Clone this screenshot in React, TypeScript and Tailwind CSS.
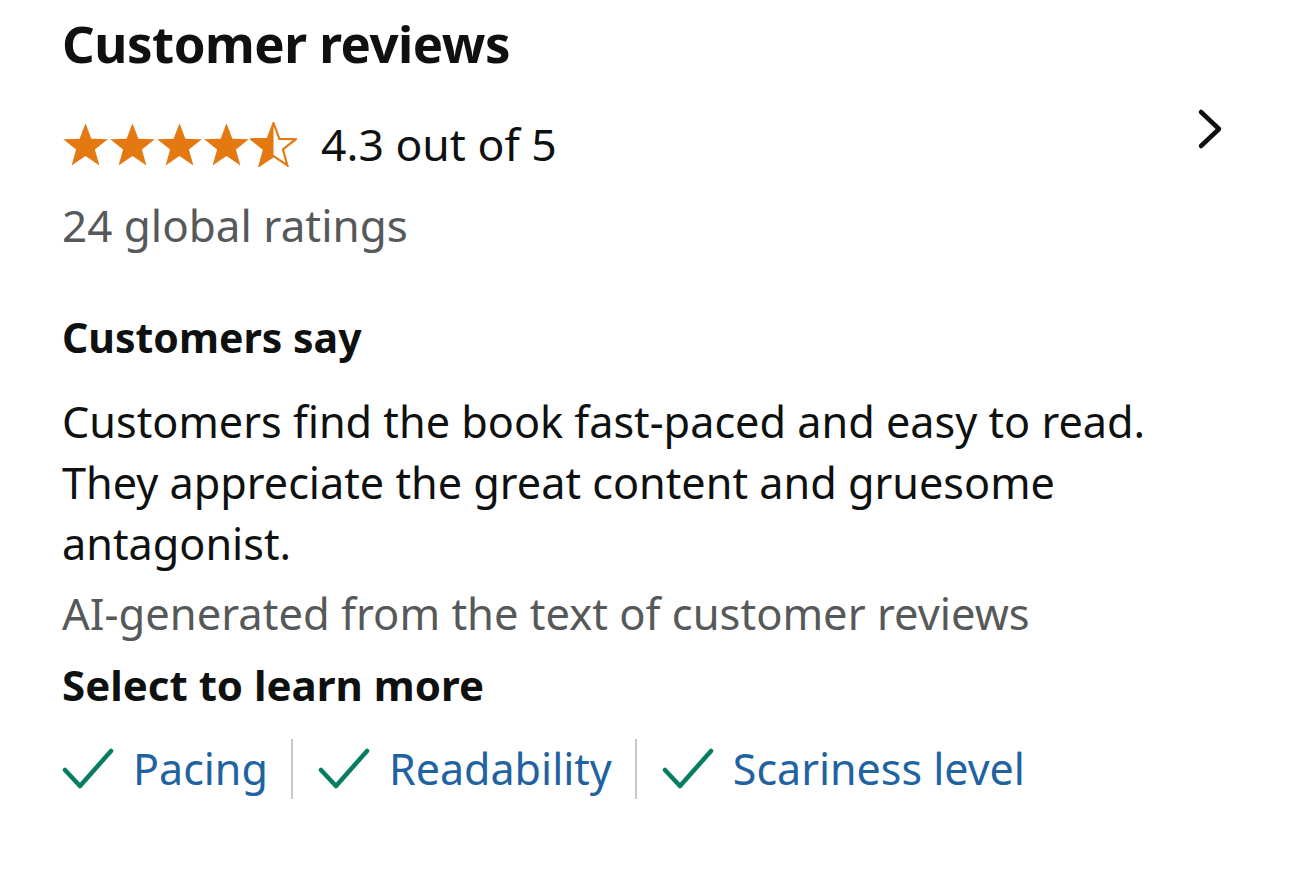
import React from 'react';

const STAR = '12,0.6 15,8.6 23.4,8.8 16.8,14 19.1,22.2 12,17.4 4.9,22.2 7.2,14 0.6,8.8 9,8.6';

const Star = ({ half }: { half?: boolean }) => (
  <svg width="47" height="45" viewBox="0 0 24 23" className="shrink-0">
    {half ? (
      <>
        <defs>
          <clipPath id="leftHalf">
            <rect x="0" y="0" width="12" height="23" />
          </clipPath>
        </defs>
        <polygon points={STAR} fill="none" stroke="#E47911" strokeWidth="1.1" />
        <polygon points={STAR} fill="#E47911" clipPath="url(#leftHalf)" />
      </>
    ) : (
      <polygon points={STAR} fill="#E47911" />
    )}
  </svg>
);

const Check = () => (
  <svg width="52" height="42" viewBox="0 0 52 42" className="shrink-0">
    <path d="M3 22 L18 38 L49 3" fill="none" stroke="#067D62" strokeWidth="4.5" strokeLinecap="round" strokeLinejoin="round" />
  </svg>
);

const aspects = ['Pacing', 'Readability', 'Scariness level'];

export default function App() {
  return (
    <div className="min-h-screen bg-white text-[#0F1111] pl-[62px] pr-[66px] pt-[13px]" style={{ fontFamily: '"Noto Sans", "Open Sans", sans-serif' }}>
      <h1 className="text-[51px] font-bold leading-[60px] tracking-[-0.5px]">Customer reviews</h1>

      <div className="flex items-start justify-between mt-[45px]">
        <div className="flex items-center">
          <div className="flex items-center">
            <Star />
            <Star />
            <Star />
            <Star />
            <Star half />
          </div>
          <span className="ml-[24px] text-[44.5px] leading-[52px]">4.3 out of 5</span>
        </div>
        <svg width="30" height="42" viewBox="0 0 30 42" className="-mt-[10px] -mr-[2px]">
          <path d="M5 4 L23 21 L5 38" fill="none" stroke="#0F1111" strokeWidth="4.5" strokeLinecap="round" strokeLinejoin="round" />
        </svg>
      </div>

      <div className="text-[44px] leading-[52px] text-[#565959] mt-[29px]">24 global ratings</div>

      <h2 className="text-[41px] font-bold leading-[52px] mt-[60px]">Customers say</h2>

      <p className="text-[43.2px] leading-[61px] mt-[28px] max-w-[1130px]">
        Customers find the book fast-paced and easy to read. They appreciate the great content and gruesome antagonist.
      </p>

      <div className="text-[43.5px] leading-[52px] text-[#565959] mt-[13px]">AI-generated from the text of customer reviews</div>

      <div className="text-[42px] font-bold leading-[52px] mt-[20px]">Select to learn more</div>

      <div className="flex items-center mt-[28px]">
        {aspects.map((a, i) => (
          <div key={a} className="flex items-center">
            {i > 0 && <div className="w-[2px] h-[60px] bg-[#C7C7C7] ml-[23px] mr-[25px]" />}
            <Check />
            <span className="ml-[19px] text-[43px] leading-[52px] text-[#2162A1]">{a}</span>
          </div>
        ))}
      </div>
    </div>
  );
}
